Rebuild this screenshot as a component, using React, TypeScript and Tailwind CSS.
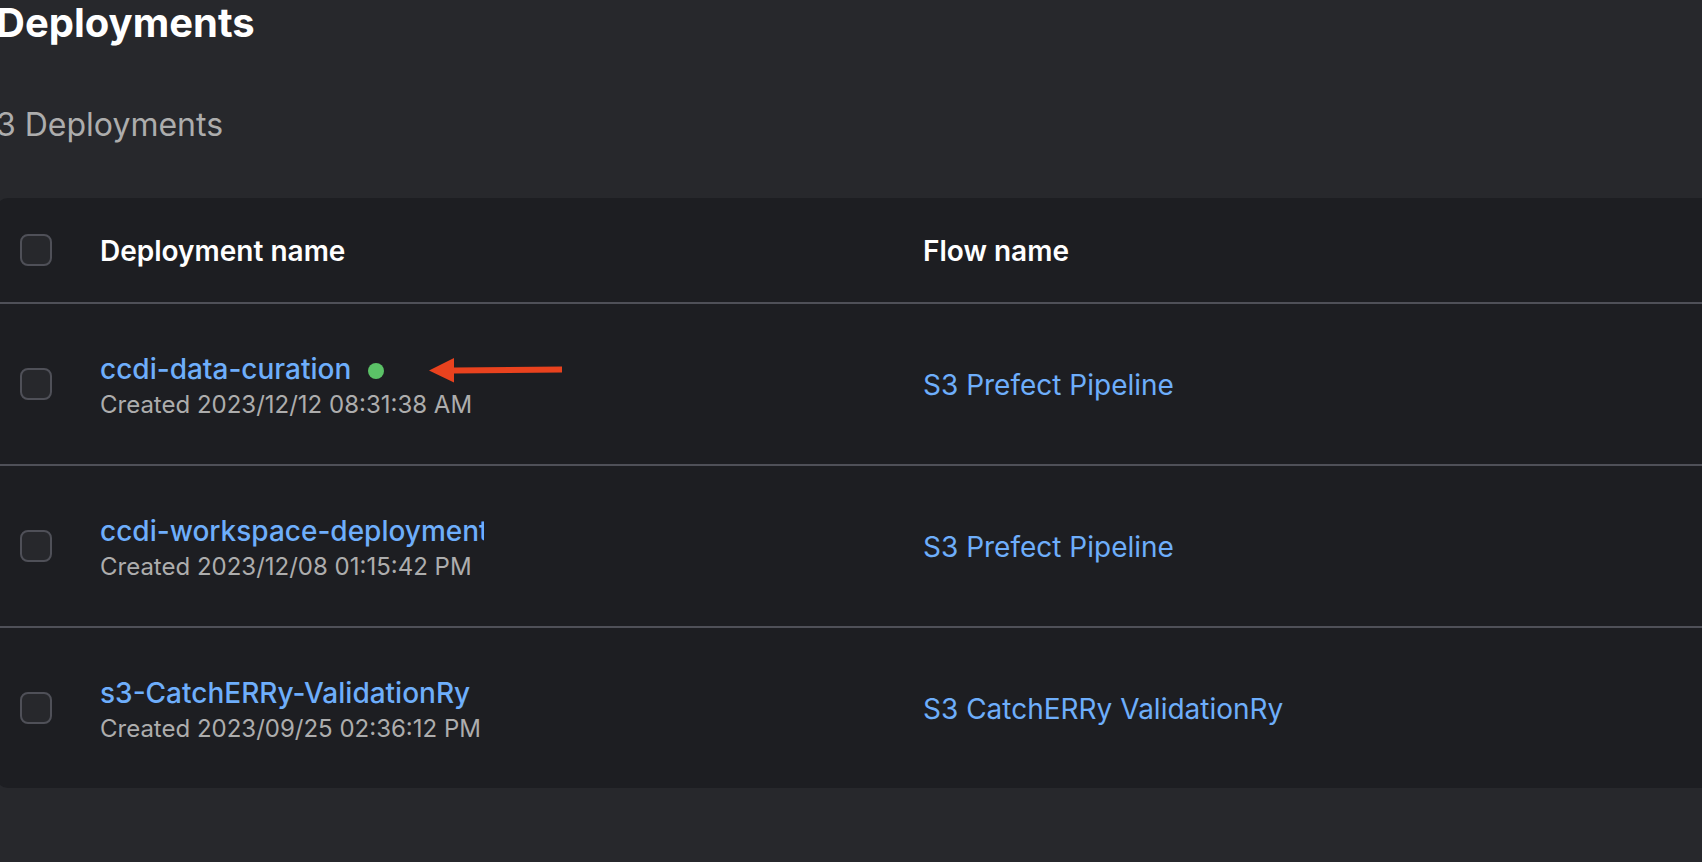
type Deployment = {
  name: string;
  created: string;
  flow: string;
  active?: boolean;
  clipped?: boolean;
};

const deployments: Deployment[] = [
  { name: "ccdi-data-curation", created: "Created 2023/12/12 08:31:38 AM", flow: "S3 Prefect Pipeline", active: true },
  { name: "ccdi-workspace-deployment", created: "Created 2023/12/08 01:15:42 PM", flow: "S3 Prefect Pipeline", clipped: true },
  { name: "s3-CatchERRy-ValidationRy", created: "Created 2023/09/25 02:36:12 PM", flow: "S3 CatchERRy ValidationRy" },
];

function Checkbox({ label }: { label: string }) {
  return (
    <input
      type="checkbox"
      aria-label={label}
      className="block size-8 appearance-none rounded-lg border-2 border-[#4f5058] bg-[#27282c] checked:bg-[#6eaefb]"
    />
  );
}

function Arrow() {
  return (
    <svg viewBox="0 0 134 28" className="h-7 w-[134px]" aria-hidden="true">
      <path d="M0 15.5 25 3v9.500l108-1v6l-108 1v9z" fill="#e9421e" />
    </svg>
  );
}

export default function App() {
  return (
    <div className="min-h-screen overflow-hidden bg-[#27282c] font-['Inter',sans-serif] text-white">
      <main className="-ml-1">
        <h1 className="pt-[3px] text-[40px] leading-10 font-bold">Deployments</h1>
        <p className="pt-[62px] text-[32px] leading-10 text-[#adadad]">3 Deployments</p>
        <div className="mt-[53px] overflow-hidden rounded-l-xl bg-[#1d1e22]">
          <table className="w-full table-fixed border-separate border-spacing-0 text-left text-[28px] leading-10">
            <colgroup>
              <col className="w-[104px]" />
              <col className="w-[823px]" />
              <col />
            </colgroup>
            <thead>
              <tr className="h-[106px] *:border-b-2 *:border-[#4f5058]">
                <th className="pl-6">
                  <Checkbox label="Select all deployments" />
                </th>
                <th className="pt-0.5 font-semibold">Deployment name</th>
                <th className="pt-0.5 font-semibold">Flow name</th>
              </tr>
            </thead>
            <tbody>
              {deployments.map((d) => (
                <tr key={d.name} className="h-[162px] *:border-b-2 *:border-[#4f5058] last:h-40 last:*:border-b-0">
                  <td className="pl-6">
                    <Checkbox label={d.name} />
                  </td>
                  <td className="pt-1.5">
                    <div className="flex h-9 items-center gap-[17px]">
                      <a
                        href="#"
                        className={d.clipped ? "w-[384px] overflow-hidden font-medium whitespace-nowrap text-[#6eaefb]" : "font-medium text-[#6eaefb]"}
                      >
                        {d.name}
                      </a>
                      {d.active && (
                        <>
                          <span className="mt-[3px] mr-7 size-4 rounded-full bg-[#5bc267]" />
                          <Arrow />
                        </>
                      )}
                    </div>
                    <p className="text-2xl leading-9 text-[#adadad]">{d.created}</p>
                  </td>
                  <td className="pt-0.5">
                    <a href="#" className="text-[#6eaefb]">
                      {d.flow}
                    </a>
                  </td>
                </tr>
              ))}
            </tbody>
          </table>
        </div>
      </main>
    </div>
  );
}
